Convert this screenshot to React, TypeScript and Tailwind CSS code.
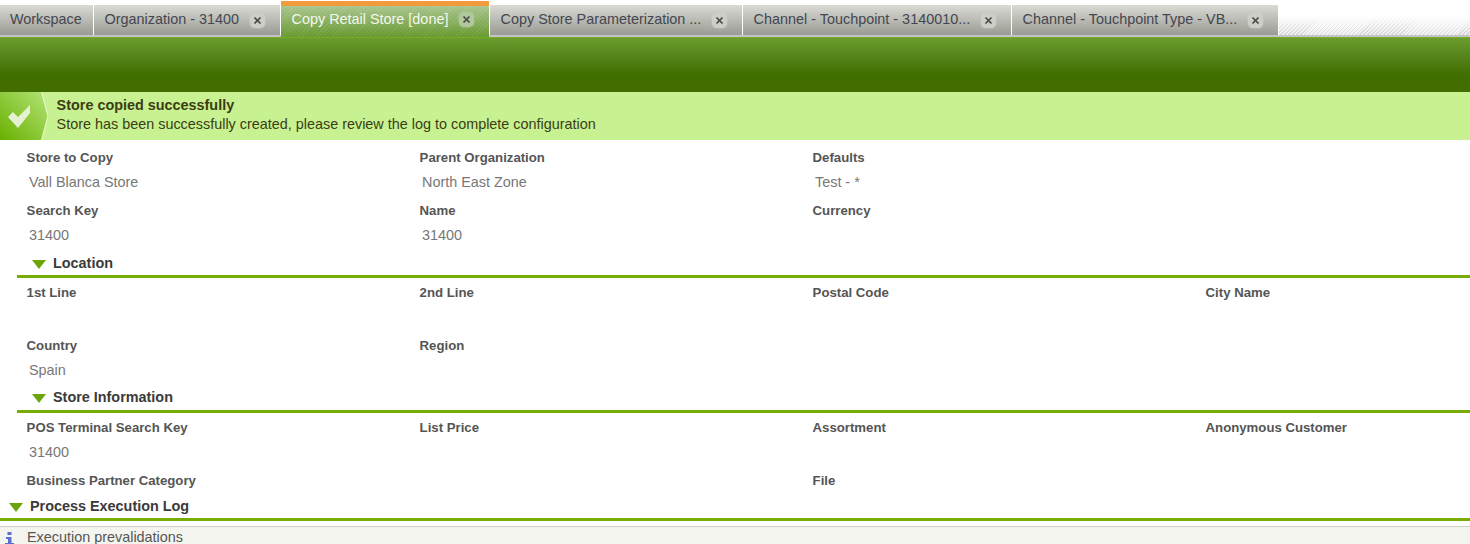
import React from 'react';

const tabs = [
  { label: 'Workspace', width: 'w-[93px]', close: false, active: false },
  { label: 'Organization - 31400', width: 'w-[186px]', close: true, active: false },
  { label: 'Copy Retail Store [done]', width: 'w-[208px]', close: true, active: true },
  { label: 'Copy Store Parameterization ...', width: 'w-[252px]', close: true, active: false },
  { label: 'Channel - Touchpoint - 3140010...', width: 'w-[268px]', close: true, active: false },
  { label: 'Channel - Touchpoint Type - VB...', width: 'w-[266px]', close: true, active: false },
];

const CloseIcon = ({ active }: { active: boolean }) => (
  <span
    className={`ml-auto flex h-[15px] w-[15px] items-center justify-center rounded-[5px] ${
      active ? 'bg-[#b0c89c] shadow-[0_0_2px_#b0c89c]' : 'bg-[#cdcec8] shadow-[0_0_2px_#cdcec8]'
    }`}
  >
    <svg width="9" height="9" viewBox="0 0 9 9">
      <path d="M1.5 1.5l6 6M7.5 1.5l-6 6" stroke="#4a4a45" strokeWidth="1.7" fill="none" />
    </svg>
  </span>
);

const Tab = ({ label, width, close, active }: (typeof tabs)[number]) => (
  <div className={`flex shrink-0 ${width} ${active ? '-mb-[2px] h-[36px] flex-col' : 'h-[30px]'}`}>
    {active && <div className="h-[5px] bg-[#f29a3c]" />}
    <div
      className={`flex flex-1 items-center text-[14.4px] ${close ? 'pl-[10.6px] pr-[15px]' : 'pl-[10px]'} ${
        active
          ? 'bg-[repeating-linear-gradient(135deg,rgba(255,255,255,0.08)_0px,rgba(255,255,255,0.08)_1px,transparent_1px,transparent_3px),linear-gradient(to_bottom,#a9c58e,#66982e)] pb-[4px] text-[#f4f8ee]'
          : 'bg-gradient-to-b from-[#dadbd5] to-[#9a9b93] text-[#444650]'
      }`}
    >
      <span>{label}</span>
      {close && <CloseIcon active={active} />}
    </div>
  </div>
);

const Field = ({ label, value, compact }: { label?: string; value?: string; compact?: boolean }) => (
  <div className={compact ? 'h-[23px]' : 'h-[53px]'}>
    <div className="flex h-[19px] items-center text-[13.2px] font-bold text-[#555555]">{label}</div>
    {!compact && <div className="mt-[6px] flex h-[19px] items-center pl-[2.4px] text-[14.4px] text-[#777777]">{value}</div>}
  </div>
);

const Arrow = () => (
  <svg width="14" height="9" viewBox="0 0 14 9" className="mt-[1px]">
    <path d="M0 0h14L7 9z" fill="#6aa50c" />
  </svg>
);

const Section = ({ title, pad }: { title: string; pad: string }) => (
  <div className={`mb-[5px] ml-[17px] flex h-[24px] items-center border-b-[3px] border-[#78ad06] pl-[15px] ${pad}`}>
    <Arrow />
    <span className="ml-[7px] text-[14.4px] font-bold text-[#3a3a3a]">{title}</span>
  </div>
);

const Row = ({ children }: { children: React.ReactNode }) => (
  <div className="grid grid-cols-[393px_393px_393px_1fr] pl-[26.6px]">{children}</div>
);

export default function App() {
  return (
    <div className="h-[544px] w-[1470px] overflow-hidden bg-white font-['Liberation_Sans',Arial,sans-serif]">
      {/* tab bar */}
      <div className="relative flex h-[37px] items-end gap-[1px] border-b-2 border-[#c4c4c8] bg-white">
        {tabs.map((t) => (
          <Tab key={t.label} {...t} />
        ))}
        <div className="h-[19px] flex-1 bg-[linear-gradient(to_bottom,#ffffff,transparent),repeating-linear-gradient(135deg,#d2d2d2_0px,#d2d2d2_1px,#f2f2f2_1px,#f2f2f2_2.8px)]" />
      </div>

      {/* toolbar */}
      <div className="h-[55px] border-t border-[#78ab26] bg-gradient-to-b from-[#6a9c2e] to-[#426e00] to-[68%]" />

      {/* success message */}
      <div className="flex h-[48px] bg-[#c8f292]">
        <div className="relative w-[48px] shrink-0">
          <svg width="48" height="48" viewBox="0 0 48 48" className="absolute left-0 top-0">
            <defs>
              <linearGradient id="msg" x1="1" y1="0" x2="0" y2="1">
                <stop offset="0" stopColor="#b4e478" />
                <stop offset="1" stopColor="#68b000" />
              </linearGradient>
            </defs>
            <path d="M0 0H41.5L48 24L41.5 48H0Z" fill="url(#msg)" />
            <path d="M41.5 0L48 24L41.5 48" fill="none" stroke="#eafad0" strokeWidth="1" />
            <path d="M8 25L13 20L18 25L30 13V21L18 36Z" fill="#e4f2d2" />
          </svg>
        </div>
        <div className="ml-[8.6px] pt-[4px] text-[14.4px] leading-[19px] text-[#3c3c12]">
          <div className="font-bold">Store copied successfully</div>
          <div>Store has been successfully created, please review the log to complete configuration</div>
        </div>
      </div>

      {/* form */}
      <div className="pt-[8px]">
        <Row>
          <Field label="Store to Copy" value="Vall Blanca Store" />
          <Field label="Parent Organization" value="North East Zone" />
          <Field label="Defaults" value="Test - *" />
        </Row>
        <Row>
          <Field label="Search Key" value="31400" />
          <Field label="Name" value="31400" />
          <Field label="Currency" />
        </Row>
        <Section title="Location" pad="pb-[1px]" />
        <Row>
          <Field label="1st Line" />
          <Field label="2nd Line" />
          <Field label="Postal Code" />
          <Field label="City Name" />
        </Row>
        <Row>
          <Field label="Country" value="Spain" />
          <Field label="Region" />
        </Row>
        <Section title="Store Information" pad="pb-[3px]" />
        <Row>
          <Field label="POS Terminal Search Key" value="31400" />
          <Field label="List Price" />
          <Field label="Assortment" />
          <Field label="Anonymous Customer" />
        </Row>
        <Row>
          <Field label="Business Partner Category" compact />
          <div />
          <Field label="File" compact />
        </Row>
      </div>

      {/* process log */}
      <div className="flex h-[27px] items-center border-b-[3px] border-[#78ad06] pl-[9px] pt-[1px]">
        <Arrow />
        <span className="ml-[7px] text-[14.4px] font-bold text-[#3a3a3a]">Process Execution Log</span>
      </div>
      <div className="mt-[5px] flex h-[22px] items-center border-t border-[#cfcfc8] bg-[#f5f5ef] pt-[1px] text-[14.4px] text-[#555555]">
        <svg width="10" height="13" viewBox="0 0 10 13" className="ml-[5px] mr-[12px]">
          <path d="M2.5 0h4v3h-4zM1 5h5.5v6h2.5v2H0v-2h3V7H1z" fill="#5b6fd0" />
        </svg>
        <span>Execution prevalidations</span>
      </div>
    </div>
  );
}
